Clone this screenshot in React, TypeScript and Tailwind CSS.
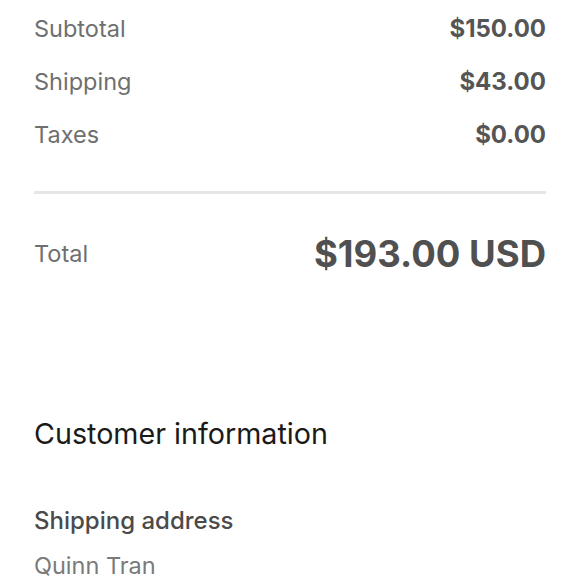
export default function App() {
  const rows = [
    { label: "Subtotal", value: "$150.00" },
    { label: "Shipping", value: "$43.00" },
    { label: "Taxes", value: "$0.00" },
  ];

  return (
    <div className="min-h-[580px] w-[580px] bg-white px-[34px] pt-[2px] font-['Inter','Liberation_Sans',sans-serif]">
      {/* Summary lines */}
      <div className="flex flex-col">
        {rows.map((r) => (
          <div key={r.label} className="flex h-[53px] items-center justify-between">
            <span className="text-[23.5px] leading-none text-[#6f6f6f]">{r.label}</span>
            <span className="text-[24px] font-bold leading-none text-[#555555]">{r.value}</span>
          </div>
        ))}
      </div>

      <div className="mt-[30px] h-[3px] bg-[#e6e6e6]" />

      <div className="mt-[36px] flex h-[48px] items-center justify-between">
        <span className="text-[23.5px] leading-none text-[#6f6f6f]">Total</span>
        <span className="text-[36.5px] font-bold leading-none text-[#505050]">$193.00 USD</span>
      </div>

      {/* Customer information */}
      <h2 className="mt-[135px] text-[28.7px] leading-[42px] text-[#1a1a1a]">Customer information</h2>

      <div className="mt-[48px] text-[24px] font-medium leading-[36px] text-[#4a4a4a]">Shipping address</div>
      <div className="mt-[9px] text-[23.5px] leading-[36px] text-[#7a7a7a]">Quinn Tran</div>
    </div>
  );
}
